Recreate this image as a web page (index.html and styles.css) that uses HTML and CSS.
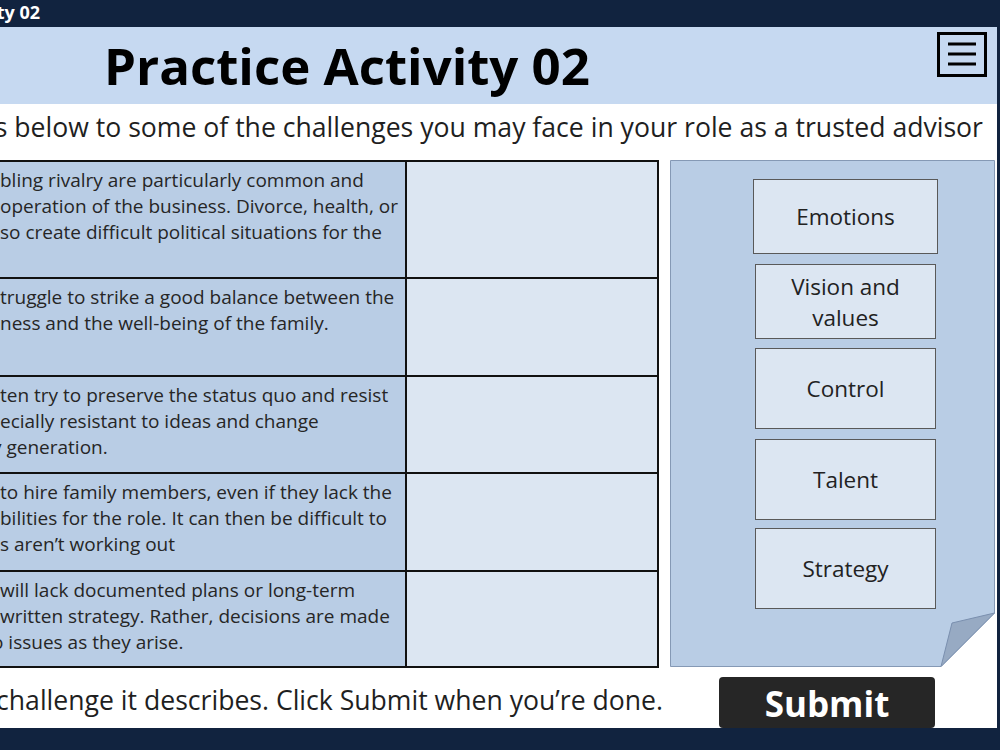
FILE: index.html
```html
<!DOCTYPE html>
<html lang="en">
  <head>
    <title>Practice Activity 02</title>
    <meta charset="utf-8">
    <link rel="stylesheet" href="styles.css">
  </head>
  <body>

  <div class="topbar">
    <div class="course"><span>Practice Activity 02</span></div>
  </div>

  <div class="slide">

    <header class="banner">
      <h1>Practice Activity 02</h1>
      <button class="menu" aria-label="Menu">
        <svg width="44" height="39" viewBox="0 0 44 39">
          <path d="M8 9H36M8 19H36M8 29H36" stroke="#000" stroke-width="3" fill="none"/>
        </svg>
      </button>
    </header>

    <div class="prompt">
      <span>Match the descriptions below to some of the challenges you may face in your role as a trusted advisor</span>
    </div>

    <div class="board">

      <div class="grid">
        <div class="row first">
          <div class="desc">
            <span class="ln">bling rivalry are particularly common and</span>
            <span class="ln">operation of the business. Divorce, health, or</span>
            <span class="ln">so create difficult political situations for the</span>
          </div>
          <div class="drop"></div>
        </div>
        <div class="row">
          <div class="desc">
            <span class="ln">truggle to strike a good balance between the</span>
            <span class="ln">ness and the well-being of the family.</span>
          </div>
          <div class="drop"></div>
        </div>
        <div class="row short">
          <div class="desc">
            <span class="ln">ten try to preserve the status quo and resist</span>
            <span class="ln">ecially resistant to ideas and change</span>
            <span class="ln cut">y generation.</span>
          </div>
          <div class="drop"></div>
        </div>
        <div class="row">
          <div class="desc">
            <span class="ln">to hire family members, even if they lack the</span>
            <span class="ln">bilities for the role. It can then be difficult to</span>
            <span class="ln">s aren&rsquo;t working out</span>
          </div>
          <div class="drop"></div>
        </div>
        <div class="row last">
          <div class="desc">
            <span class="ln">will lack documented plans or long-term</span>
            <span class="ln">written strategy. Rather, decisions are made</span>
            <span class="ln cut">o issues as they arise.</span>
          </div>
          <div class="drop"></div>
        </div>
      </div>

      <div class="bank">
        <svg class="paper" viewBox="0 0 325 507" preserveAspectRatio="none">
          <polygon points="0.5,0.5 324.5,0.5 324.5,453 271,506.5 0.5,506.5" fill="#b9cde5" stroke="#8599b5"/>
          <polygon points="271,506.5 282,463 324.5,453" fill="#97aac3" stroke="#7a8fae"/>
        </svg>
        <div class="chip wide">Emotions</div>
        <div class="chip vision">Vision and<br>values</div>
        <div class="chip tall">Control</div>
        <div class="chip tall talent">Talent</div>
        <div class="chip tall strategy">Strategy</div>
      </div>

    </div>

    <footer class="actions">
      <div class="hint">
        <span>Drag each challenge to the description of the challenge it describes. Click Submit when you&rsquo;re done.</span>
      </div>
      <button class="submit">Submit</button>
    </footer>

  </div>

  </body>
</html>
```

FILE: styles.css
```css
html {
  height: 100%;
}
body {
  margin: 0;
  padding: 0;
  height: 750px;
  overflow: hidden;
  background: #11233f;
  color: #1f1f1f;
  font-family: "Open Sans", "Noto Sans", sans-serif;
}

.topbar {
  height: 27px;
  display: flex;
}
.course {
  width: 40px;
  display: flex;
  justify-content: flex-end;
  white-space: nowrap;
  color: #fff;
  font-weight: 700;
  font-size: 18px;
  line-height: 25px;
}

.slide {
  width: 997px;
  height: 701px;
  background: #fff;
  display: flex;
  flex-direction: column;
}

.banner {
  height: 77px;
  flex-shrink: 0;
  background: #c6d9f1;
  display: flex;
  align-items: flex-start;
}
.banner h1 {
  flex: 1;
  margin: 0;
  padding-left: 104px;
  font-size: 51px;
  font-weight: 700;
  line-height: 76px;
  color: #000;
}
.menu {
  width: 50px;
  height: 45px;
  margin: 5px 10px 0 0;
  padding: 0;
  border: 3px solid #000;
  background: transparent;
  display: flex;
}

.prompt {
  height: 56px;
  flex-shrink: 0;
  display: flex;
  justify-content: flex-end;
  padding-right: 14px;
  white-space: nowrap;
  font-size: 26.6px;
  line-height: 46px;
}

.board {
  height: 507px;
  flex-shrink: 0;
  display: flex;
  gap: 11px;
}

.grid {
  width: 663px;
  height: 508px;
  margin-left: -4px;
  border: 2px solid #111;
  box-sizing: border-box;
  display: flex;
  flex-direction: column;
}
.row {
  height: 96px;
  display: flex;
  border-bottom: 2px solid #111;
}
.row.first {
  height: 115px;
}
.row.short {
  height: 95px;
}
.row.last {
  height: 94px;
  border-bottom: 0;
}
.desc {
  flex: 1;
  background: #b9cde5;
  border-right: 2px solid #111;
  padding: 5px 0 0 2px;
  overflow: hidden;
  font-size: 19px;
  line-height: 26px;
  color: #262626;
  white-space: nowrap;
}
.ln {
  display: block;
}
.ln.cut {
  margin-left: -8px;
}
.drop {
  width: 250px;
  background: #dce6f2;
}

.bank {
  position: relative;
  width: 325px;
  height: 507px;
  box-sizing: border-box;
  padding: 19px 0 0 85px;
  display: flex;
  flex-direction: column;
  gap: 9px;
}
.paper {
  position: absolute;
  left: 0;
  top: 0;
  width: 100%;
  height: 100%;
}
.chip {
  position: relative;
  width: 181px;
  height: 75px;
  box-sizing: border-box;
  border: 1px solid #595959;
  background: #dce6f2;
  display: flex;
  align-items: center;
  justify-content: center;
  text-align: center;
  font-size: 22.5px;
  line-height: 31px;
  color: #222;
}
.chip.wide {
  width: 185px;
  margin-left: -2px;
}
.chip.vision {
  margin-top: 1px;
}
.chip.tall {
  height: 81px;
}
.chip.talent {
  margin-top: 1px;
}
.chip.strategy {
  margin-top: -1px;
}

.actions {
  height: 61px;
  display: flex;
  align-items: flex-start;
}
.hint {
  width: 663px;
  height: 61px;
  display: flex;
  justify-content: flex-end;
  white-space: nowrap;
  font-size: 26.6px;
  line-height: 66px;
}
.submit {
  width: 216px;
  height: 51px;
  margin: 10px 0 0 56px;
  padding: 0;
  border: 0;
  border-radius: 4px;
  background: #262626;
  color: #fff;
  font-family: "Open Sans", "Noto Sans", sans-serif;
  font-size: 35px;
  font-weight: 700;
  line-height: 53px;
}
```
